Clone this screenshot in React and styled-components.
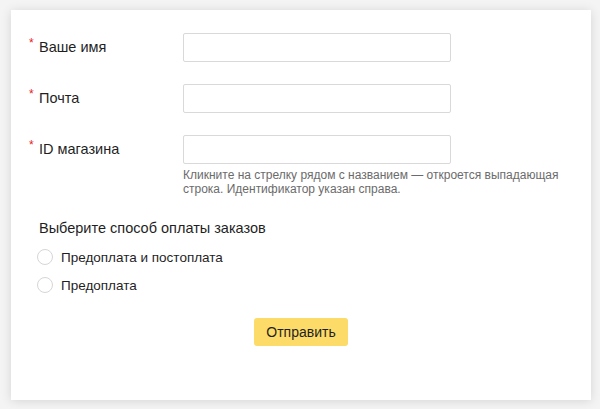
import styled, { createGlobalStyle } from 'styled-components';

const GlobalStyle = createGlobalStyle`
  html, body {
    margin: 0;
    padding: 0;
    background: #f4f4f4;
  }
  body {
    font-family: "Liberation Sans", Arial, sans-serif;
    color: #1f1f1f;
  }
`;

const Page = styled.div`
  padding: 10px 9px 9px 11px;
`;

const Card = styled.form`
  width: 580px;
  height: 390px;
  box-sizing: border-box;
  background: #fff;
  box-shadow: 0 1px 10px rgba(0, 0, 0, 0.13);
  padding: 23px 18px 0 18px;
  display: flex;
  flex-direction: column;
`;

const Row = styled.div`
  display: grid;
  grid-template-columns: 154px 268px;
  align-items: start;
  margin-bottom: 22px;
`;

const Label = styled.label`
  display: flex;
  align-items: flex-start;
  font-size: 14.5px;
  line-height: 18px;
  padding-top: 5px;
  color: #1f1f1f;
`;

const Star = styled.span`
  color: #e8211d;
  font-size: 12px;
  line-height: 10px;
  width: 10px;
`;

const Field = styled.div`
  display: flex;
  flex-direction: column;
`;

const Input = styled.input`
  box-sizing: border-box;
  height: 29px;
  width: 268px;
  border: 1px solid #d9d9d9;
  border-radius: 2px;
  background: #fff;
  outline: none;
  font: inherit;
`;

const Hint = styled.div`
  width: 400px;
  margin-top: 4px;
  font-size: 12px;
  line-height: 14px;
  color: #6b6b6b;
`;

const Section = styled.div`
  padding-left: 10px;
  margin-top: 1px;
`;

const Heading = styled.div`
  font-size: 14.5px;
  line-height: 18px;
  margin-bottom: 6px;
`;

const Option = styled.label`
  display: flex;
  align-items: center;
  gap: 8px;
  height: 28px;
  margin-left: -2px;
  font-size: 13.5px;
  color: #1f1f1f;
`;

const Circle = styled.span`
  width: 14px;
  height: 14px;
  border: 1px solid #d6d6d6;
  border-radius: 50%;
  background: #fff;
`;

const Footer = styled.div`
  display: flex;
  justify-content: center;
  margin-top: 19px;
`;

const Button = styled.button`
  width: 94px;
  height: 28px;
  border: none;
  border-radius: 3px;
  background: #fcdb68;
  font-family: inherit;
  font-size: 14px;
  color: #1f1f1f;
  padding: 0;
`;

const fields = [
  { label: 'Ваше имя' },
  { label: 'Почта' },
  {
    label: 'ID магазина',
    hint: 'Кликните на стрелку рядом с названием — откроется выпадающая строка. Идентификатор указан справа.',
  },
];

const options = ['Предоплата и постоплата', 'Предоплата'];

export default function App() {
  return (
    <Page>
      <GlobalStyle />
      <Card>
        {fields.map(f => (
          <Row key={f.label}>
            <Label>
              <Star>*</Star>
              {f.label}
            </Label>
            <Field>
              <Input />
              {f.hint && <Hint>{f.hint}</Hint>}
            </Field>
          </Row>
        ))}
        <Section>
          <Heading>Выберите способ оплаты заказов</Heading>
          {options.map(o => (
            <Option key={o}>
              <Circle />
              {o}
            </Option>
          ))}
        </Section>
        <Footer>
          <Button type="button">Отправить</Button>
        </Footer>
      </Card>
    </Page>
  );
}
